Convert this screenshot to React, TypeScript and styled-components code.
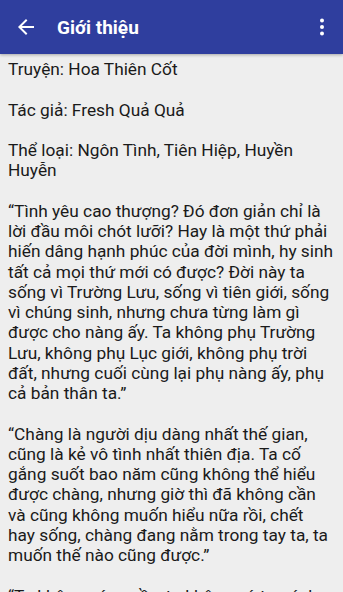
import styled, { createGlobalStyle } from 'styled-components';

const GlobalStyle = createGlobalStyle`
  html, body {
    margin: 0;
    padding: 0;
    background-color: #eeeeee;
  }
  body {
    font-family: Roboto, "Noto Sans", sans-serif;
  }
`;

const paragraphs = [
  'Truyện: Hoa Thiên Cốt',
  'Tác giả: Fresh Quả Quả',
  'Thể loại: Ngôn Tình, Tiên Hiệp, Huyền Huyễn',
  '“Tình yêu cao thượng? Đó đơn giản chỉ là lời đầu môi chót lưỡi? Hay là một thứ phải hiến dâng hạnh phúc của đời mình, hy sinh tất cả mọi thứ mới có được? Đời này ta sống vì Trường Lưu, sống vì tiên giới, sống vì chúng sinh, nhưng chưa từng làm gì được cho nàng ấy. Ta không phụ Trường Lưu, không phụ Lục giới, không phụ trời đất, nhưng cuối cùng lại phụ nàng ấy, phụ cả bản thân ta.”',
  '“Chàng là người dịu dàng nhất thế gian, cũng là kẻ vô tình nhất thiên địa. Ta cố gắng suốt bao năm cũng không thể hiểu được chàng, nhưng giờ thì đã không cần và cũng không muốn hiểu nữa rồi, chết hay sống, chàng đang nằm trong tay ta, ta muốn thế nào cũng được.”',
  '“Ta không có quyền, ta không có tư cách, ta không thể nào buông tay được.”',
];

function BackIcon() {
  return (
    <svg width="24" height="24" viewBox="0 0 24 24" fill="#ffffff">
      <path d="M20 11H7.83l5.59-5.59L12 4l-8 8 8 8 1.41-1.41L7.83 13H20v-2z" />
    </svg>
  );
}

function MoreIcon() {
  return (
    <svg width="24" height="24" viewBox="0 0 24 24" fill="#ffffff">
      <circle cx="12" cy="5.5" r="2" />
      <circle cx="12" cy="12" r="2" />
      <circle cx="12" cy="18.5" r="2" />
    </svg>
  );
}

export default function App() {
  return (
    <Screen>
      <GlobalStyle />
      <Toolbar>
        <IconButton type="button" aria-label="Quay lại">
          <BackIcon />
        </IconButton>
        <Title>Giới thiệu</Title>
        <IconButton type="button" aria-label="Thêm">
          <MoreIcon />
        </IconButton>
      </Toolbar>
      <Content>
        {paragraphs.map((text) => (
          <Paragraph key={text}>{text}</Paragraph>
        ))}
      </Content>
    </Screen>
  );
}

const Screen = styled.div`
  width: 343px;
  height: 592px;
  overflow: hidden;
  background-color: #eeeeee;
  display: flex;
  flex-direction: column;
`;

const Toolbar = styled.header`
  position: relative;
  z-index: 1;
  flex-shrink: 0;
  height: 54px;
  display: flex;
  align-items: center;
  padding: 0 9px 0 14px;
  background-color: #2f3e9e;
  box-shadow: 0 1px 3px rgba(0, 0, 0, 0.3);
`;

const IconButton = styled.button`
  display: flex;
  align-items: center;
  justify-content: center;
  width: 24px;
  height: 24px;
  padding: 0;
  border: none;
  background: none;
  cursor: pointer;
`;

const Title = styled.h1`
  flex: 1;
  margin: 0 0 0 19px;
  font-size: 19px;
  font-weight: 700;
  color: #ffffff;
  letter-spacing: 0;
`;

const Content = styled.main`
  flex: 1;
  padding: 5px 9px 0 8px;
`;

const Paragraph = styled.p`
  margin: 0 0 20.25px;
  font-size: 17.3px;
  line-height: 20.25px;
  color: #1a1a1a;
`;
